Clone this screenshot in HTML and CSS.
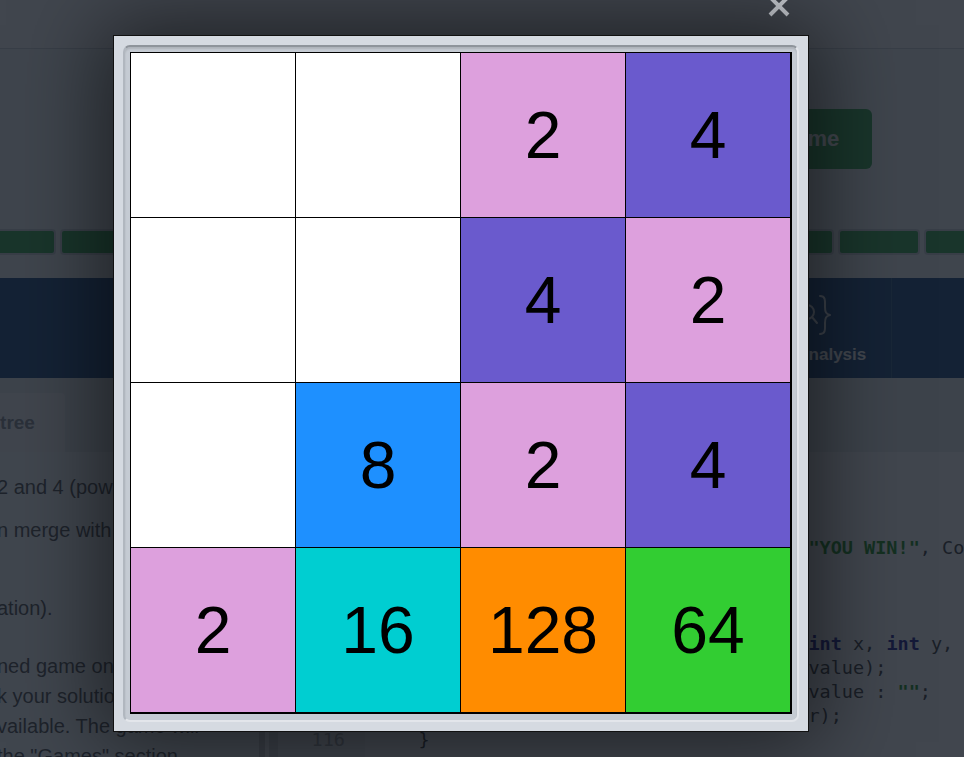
FILE: index.html
```html
<!DOCTYPE html>
<html lang="en">
<head>
<meta charset="utf-8">
<title>2048</title>
<link rel="stylesheet" href="styles.css">
</head>
<body>
<div class="page">
  <div class="header"></div>
  <div class="hero">
    <div class="btn">New Game</div>
    <div class="bars">
      <div class="bar"></div><div class="bar"></div><div class="bar"></div><div class="bar"></div>
      <div class="bar"></div><div class="bar"></div><div class="bar"></div><div class="bar"></div>
      <div class="bar"></div><div class="bar"></div><div class="bar"></div><div class="bar"></div>
    </div>
  </div>
  <div class="band">
    <div class="band-item">
      <svg class="band-icon" viewBox="0 0 48 44" width="48" height="44"><path d="M8 6 L20 22 L8 38" /></svg>
      <span>Play</span>
    </div>
    <div class="band-item">
      <svg class="band-icon" viewBox="0 0 48 44" width="48" height="44"><rect x="10" y="6" width="28" height="32" rx="3"/></svg>
      <span>Rules</span>
    </div>
    <div class="band-item">
      <svg class="band-icon" viewBox="0 0 48 44" width="48" height="44"><path d="M12 22 L20 30 L36 12"/></svg>
      <span>Solution</span>
    </div>
    <div class="band-item">
      <svg class="band-icon" viewBox="0 0 48 44" width="48" height="44">
        <path d="M12 3 C6 3 7 8 7 14 C7 19 6 21 2 22 C6 23 7 25 7 30 C7 36 6 41 12 41"/>
        <circle cx="23" cy="19" r="7"/>
        <path d="M28 24 L33 30"/>
        <path d="M36 3 C42 3 41 8 41 14 C41 19 42 21 46 22 C42 23 41 25 41 30 C41 36 42 41 36 41"/>
      </svg>
      <span>Code Analysis</span>
    </div>
  </div>
  <div class="tabs">
    <div class="tab">Game tree</div>
  </div>
  <div class="content">
    <div class="doc">
      <p class="l1">2 and 4 (powers of two) appear at random</p>
      <p class="l2">n merge with another tile of the same</p>
      <p class="l3">ation).</p>
      <p class="l4">ned game on the board and<br>k your solution against the<br>vailable. The game will<br>the "Games" section.</p>
    </div>
    <div class="code">
      <div class="strip"></div>
      <div class="gutter">105<br>106<br>107<br>108<br>109<br>110<br>111<br>112<br>113<br>114<br>115<br>116</div>
<pre class="lines">    }

    <span class="kw">private void</span> checkWin() {
        <span class="kw">if</span> (board.hasWon()) showStatus(<span class="str">"YOU WIN!"</span>, Color.GREEN);
    }

    <span class="cm">// update a single tile</span>
    <span class="kw">private void</span> setTile(JLabel label, <span class="kw">int</span> x, <span class="kw">int</span> y, <span class="kw">int</span> value) {
        Color bg = TileColors.forValue(value);
        String text = value &gt; 0 ? <span class="str">""</span> + value : <span class="str">""</span>;
        label.setText(text); paintTile(r);
    }</pre>
    </div>
  </div>
</div>

<div class="overlay"></div>
<svg class="close" viewBox="0 0 24 24" width="24" height="24"><path d="M3 3 L21 21 M21 3 L3 21"/></svg>
<div class="modal">
  <div class="frame">
    <div class="board">
      <div class="cell"></div>
      <div class="cell"></div>
      <div class="cell t2">2</div>
      <div class="cell t4">4</div>
      <div class="cell"></div>
      <div class="cell"></div>
      <div class="cell t4">4</div>
      <div class="cell t2">2</div>
      <div class="cell"></div>
      <div class="cell t8">8</div>
      <div class="cell t2">2</div>
      <div class="cell t4">4</div>
      <div class="cell t2">2</div>
      <div class="cell t16">16</div>
      <div class="cell t128">128</div>
      <div class="cell t64">64</div>
    </div>
  </div>
</div>
</body>
</html>
```
FILE: styles.css
```css
* { box-sizing: border-box; }
html, body { margin: 0; padding: 0; }
body {
  font-family: "Liberation Sans", Arial, sans-serif;
  background: #eef1f4;
  width: 964px;
  height: 757px;
  overflow: hidden;
  position: relative;
}
.page { width: 964px; }

.header {
  height: 49px;
  background: #f6f8fa;
  border-bottom: 1px solid #c6cbd1;
}

.hero { height: 229px; padding-top: 60px; }
.btn {
  margin-left: 694px;
  width: 178px;
  height: 60px;
  background: #1e9b3a;
  border-radius: 6px;
  color: #fff;
  font-weight: bold;
  font-size: 22px;
  display: flex;
  align-items: center;
  justify-content: center;
}
.bars {
  display: flex;
  gap: 4px;
  margin-top: 60px;
  margin-left: -26px;
}
.bar {
  flex: none;
  width: 82.4px;
  height: 26px;
  background: #1e9b3a;
  border: 2px solid #c9ced4;
  border-radius: 4px;
}

.band {
  height: 100px;
  background: #00356e;
  display: flex;
  padding-left: 220px;
}
.band-item {
  width: 168px;
  border-left: 1px solid rgba(255,255,255,0.12);
  display: flex;
  flex-direction: column;
  align-items: center;
  padding-top: 15px;
  gap: 8px;
  color: #fff;
  font-weight: bold;
  font-size: 17px;
  line-height: 20px;
}
.band-item:last-child { border-right: 1px solid rgba(255,255,255,0.12); }
.band-icon { fill: none; stroke: #dde1e6; stroke-width: 2; stroke-linecap: round; stroke-linejoin: round; }

.tabs {
  height: 74px;
  background: #e1e5e9;
  padding-top: 15px;
  display: flex;
}
.tab {
  margin-left: -88px;
  height: 59px;
  padding: 0 30px;
  background: #f1f3f5;
  border-radius: 0 4px 0 0;
  font-weight: bold;
  font-size: 19px;
  color: #7a8088;
  display: flex;
  align-items: center;
  white-space: nowrap;
}

.content {
  display: flex;
  height: 305px;
  background: #f4f6f8;
}
.doc {
  flex: none;
  width: 262px;
  margin-left: -3px;
  padding-top: 20px;
  overflow: hidden;
  white-space: nowrap;
  font-size: 20px;
  line-height: 30px;
  color: #3a3a3a;
}
.doc p { margin: 0; }
.doc .l2 { margin-top: 13px; }
.doc .l3 { margin-top: 48px; }
.doc .l4 { margin-top: 28px; }

.code {
  flex: 1;
  display: flex;
  background: #f7f7f7;
  border-left: 6px solid #c9c9c9;
  font-family: "DejaVu Sans Mono", "Liberation Mono", monospace;
  font-size: 18.5px;
  line-height: 24px;
}
.strip {
  flex: none;
  width: 9px;
  margin-left: 4px;
  background: #d2d2d2;
}
.gutter {
  flex: none;
  width: 87px;
  background: #ebebeb;
  padding: 12px 20px 0 0;
  text-align: right;
  color: #9a9a9a;
}
.lines {
  margin: 0;
  padding: 12px 0 0 9px;
  font: inherit;
  color: #222;
  white-space: pre;
  overflow: hidden;
}
.kw { color: #000080; font-weight: bold; }
.str { color: #008000; font-weight: bold; }
.cm { color: #808080; font-style: italic; }

.overlay {
  position: fixed;
  inset: 0;
  background: rgba(25, 31, 40, 0.82);
}
.close {
  position: absolute;
  left: 767px;
  top: -6px;
  fill: none;
  stroke: #c9cdd3;
  stroke-width: 4;
}
.modal {
  position: absolute;
  left: 113px;
  top: 35px;
  width: 696px;
  height: 697px;
  border: 1px solid #111;
  background: #d5dae1;
  padding: 9px;
  box-shadow: 0 0 80px 10px rgba(0, 0, 0, 0.55);
}
.frame {
  width: 100%;
  height: 100%;
  border-radius: 7px;
  background: #c5cbd3;
  border-style: solid;
  border-width: 2px;
  border-color: #8e949b #e3e6eb #e3e6eb #b1b7bf;
  box-shadow: inset 0 2px 2px rgba(0, 0, 0, 0.12);
  padding: 5px;
}
.board {
  display: grid;
  grid-template-columns: repeat(4, 164px);
  grid-auto-rows: 164px;
  gap: 1px;
  background: #000;
  padding: 1px 2px 2px 1px;
  width: max-content;
}
.cell {
  display: flex;
  align-items: center;
  justify-content: center;
  font-family: "Liberation Sans", Arial, sans-serif;
  font-size: 66px;
  color: #000;
  background: #fff;
}
.t2 { background: #dda0dd; }
.t4 { background: #6a5acd; }
.t8 { background: #1e90ff; }
.t16 { background: #00ced1; }
.t64 { background: #32cd32; }
.t128 { background: #ff8c00; }
```
